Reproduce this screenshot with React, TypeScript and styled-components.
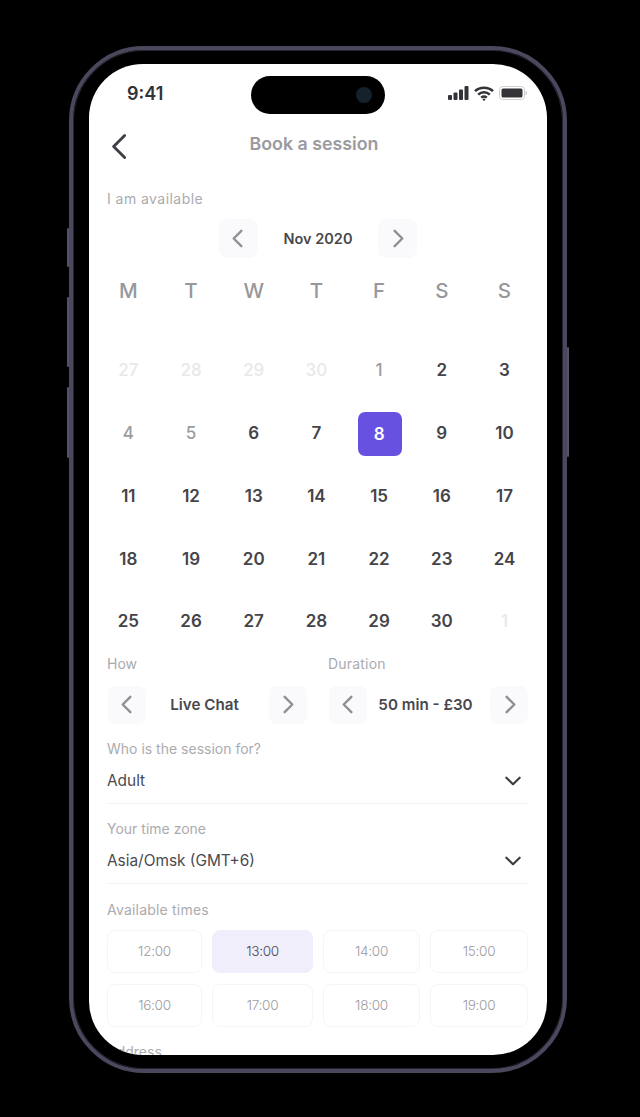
import React from 'react';
import styled, { createGlobalStyle } from 'styled-components';

const GlobalStyle = createGlobalStyle`
  html, body {
    margin: 0;
    padding: 0;
    background: #000;
    font-family: Inter, "Open Sans", sans-serif;
  }
  * { box-sizing: border-box; }
`;

const weekDays = ['M', 'T', 'W', 'T', 'F', 'S', 'S'];

type DayTone = 'faint' | 'muted' | 'normal' | 'selected';

const days: { label: number; tone: DayTone }[] = [
  ...[27, 28, 29, 30].map((label) => ({ label, tone: 'faint' as DayTone })),
  { label: 1, tone: 'muted' },
  { label: 2, tone: 'normal' },
  { label: 3, tone: 'normal' },
  { label: 4, tone: 'muted' },
  { label: 5, tone: 'muted' },
  { label: 6, tone: 'normal' },
  { label: 7, tone: 'normal' },
  { label: 8, tone: 'selected' },
  ...Array.from({ length: 22 }, (_, i) => ({ label: i + 9, tone: 'normal' as DayTone })),
  { label: 1, tone: 'faint' }
];

const times = ['12:00', '13:00', '14:00', '15:00', '16:00', '17:00', '18:00', '19:00'];

const Page = styled.div`
  width: 640px;
  height: 1117px;
  padding: 46px 0 0 69px;
  background: #000;
  overflow: hidden;
`;

const Phone = styled.div`
  position: relative;
  width: 498px;
  height: 1027px;
  padding: 14px 16px;
  border: 4px solid #4b475c;
  border-radius: 75px;
  background: #000;
  box-shadow: inset 0 0 0 1px #25232f;
`;

const SideButton = styled.div<{ $side: 'left' | 'right'; $top: number; $height: number }>`
  position: absolute;
  ${(p) => p.$side}: -6px;
  top: ${(p) => p.$top}px;
  width: 2px;
  height: ${(p) => p.$height}px;
  background: #55516a;
  border-radius: 1px;
`;

const Screen = styled.div`
  position: relative;
  width: 458px;
  height: 991px;
  padding: 0 19px 0 18px;
  background: #fff;
  border-radius: 54px;
  overflow: hidden;
`;

const Island = styled.div`
  position: absolute;
  left: 162px;
  top: 12px;
  width: 134px;
  height: 38px;
  background: #000;
  border-radius: 19px;
`;

const Camera = styled.div`
  position: absolute;
  right: 13px;
  top: 11px;
  width: 16px;
  height: 16px;
  border-radius: 50%;
  background: #14222e;
`;

const StatusBar = styled.div`
  display: flex;
  align-items: center;
  justify-content: space-between;
  height: 58px;
  padding: 0 1px 0 20px;
`;

const Clock = styled.span`
  font-size: 18px;
  font-weight: 600;
  color: #333338;
`;

const StatusIcons = styled.div`
  display: flex;
  align-items: center;
  gap: 5px;
`;

const Header = styled.div`
  position: relative;
  display: flex;
  align-items: center;
  justify-content: center;
  height: 42px;
  padding-right: 7px;
`;

const BackButton = styled.div`
  position: absolute;
  left: -3px;
  top: 8px;
  display: flex;
`;

const Title = styled.h1`
  margin: 0;
  font-size: 17.8px;
  font-weight: 600;
  color: #9a9a9f;
`;

const Label = styled.div<{ $mt: number; $track?: number }>`
  margin-top: ${(p) => p.$mt}px;
  height: 20px;
  font-size: 14px;
  line-height: 20px;
  font-weight: 400;
  letter-spacing: ${(p) => p.$track ?? 0}px;
  color: #ababaf;
`;

const MonthNav = styled.div`
  display: flex;
  align-items: center;
  margin: 10px 0 0 112px;
  width: 198px;
  justify-content: space-between;
`;

const NavButton = styled.div<{ $size: number }>`
  display: flex;
  flex: none;
  align-items: center;
  justify-content: center;
  width: ${(p) => p.$size}px;
  height: ${(p) => p.$size}px;
  border-radius: 8px;
  background: #faf9fc;
`;

const MonthValue = styled.span`
  font-size: 14.5px;
  font-weight: 600;
  color: #48484d;
  white-space: nowrap;
`;

const NavValue = styled.span`
  margin-right: 6px;
  font-size: 15.2px;
  font-weight: 600;
  color: #48484d;
  white-space: nowrap;
`;

const Calendar = styled.div`
  display: grid;
  grid-template-columns: repeat(7, 62.7px);
  margin-left: -10px;
  width: 439px;
`;

const WeekRow = styled(Calendar)`
  margin-top: 17px;
  height: 30px;
`;

const DaysGrid = styled(Calendar)`
  margin-top: 34px;
  grid-auto-rows: 62.75px;
`;

const WeekDay = styled.div`
  display: flex;
  align-items: center;
  justify-content: center;
  font-size: 20.5px;
  font-weight: 500;
  color: #97979c;
`;

const toneColors: Record<DayTone, string> = {
  faint: '#e8e8ea',
  muted: '#9b9b9f',
  normal: '#444449',
  selected: '#fff'
};

const DayCell = styled.div`
  display: flex;
  align-items: center;
  justify-content: center;
`;

const DayNumber = styled.div<{ $tone: DayTone }>`
  display: flex;
  align-items: center;
  justify-content: center;
  width: 44px;
  height: 44px;
  margin: ${(p) => (p.$tone === 'selected' ? '2px 0 0 2px' : '0')};
  padding-right: ${(p) => (p.$tone === 'selected' ? '2px' : '0')};
  border-radius: 7px;
  font-size: 17px;
  font-weight: ${(p) => (p.$tone === 'normal' || p.$tone === 'selected' ? 600 : 500)};
  color: ${(p) => toneColors[p.$tone]};
  background: ${(p) => (p.$tone === 'selected' ? '#6651e1' : 'transparent')};
`;

const OptionRow = styled.div`
  display: grid;
  grid-template-columns: 221px 200px;
  margin-top: 1px;
`;

const Stepper = styled.div`
  display: flex;
  align-items: center;
  justify-content: space-between;
  width: 199px;
  margin: 12px 0 0 1px;
`;

const Select = styled.div`
  display: flex;
  align-items: center;
  justify-content: space-between;
  margin-top: 11px;
  padding: 0 5px 11px 0;
  height: 34px;
  border-bottom: 1px solid #f1f1f3;
`;

const SelectValue = styled.span`
  font-size: 15.4px;
  line-height: 22px;
  color: #4a4a4f;
`;

const TimeGrid = styled.div`
  display: grid;
  grid-template-columns: 95px 101px 97px 98px;
  grid-auto-rows: 43px;
  gap: 11px 10px;
  margin-top: 10px;
`;

const TimeSlot = styled.div<{ $active?: boolean }>`
  display: flex;
  align-items: center;
  justify-content: center;
  border-radius: 8px;
  border: 1px solid ${(p) => (p.$active ? '#f0eefb' : '#f5f5f7')};
  background: ${(p) => (p.$active ? '#f0eefb' : '#fff')};
  font-size: 13.6px;
  font-weight: 300;
  letter-spacing: -0.3px;
  color: ${(p) => (p.$active ? '#4a4855' : '#9c9ca1')};
`;

const Chevron = ({
  dir,
  size = 23,
  color = '#8f8f94',
  width = 2.5
}: {
  dir: 'left' | 'right' | 'down';
  size?: number;
  color?: string;
  width?: number;
}) => {
  const d = dir === 'left' ? 'M15 4 7 12l8 8' : dir === 'right' ? 'M9 4l8 8-8 8' : 'M4 8l8 8 8-8';
  return (
    <svg width={size} height={size} viewBox="0 0 24 24" fill="none">
      <path d={d} stroke={color} strokeWidth={width} strokeLinecap="round" strokeLinejoin="round" />
    </svg>
  );
};

const SignalIcon = () => (
  <svg width="21" height="14" viewBox="0 0 21 14" fill="#333338">
    <rect x="0" y="9" width="4" height="5" rx="1" />
    <rect x="5.5" y="6.5" width="4" height="7.5" rx="1" />
    <rect x="11" y="3.5" width="4" height="10.5" rx="1" />
    <rect x="16.5" y="0" width="4" height="14" rx="1" />
  </svg>
);

const WifiIcon = () => (
  <svg width="20" height="15" viewBox="0 0 20 15" fill="none" stroke="#333338" strokeWidth="2.5">
    <path d="M1 5.2C6 .6 14 .6 19 5.2" />
    <path d="M4.2 8.6c3.3-3 8.3-3 11.6 0" />
    <path d="M7.2 11.6c1.6-1.3 4-1.3 5.6 0" />
    <circle cx="10" cy="13.6" r="1.2" fill="#333338" stroke="none" />
  </svg>
);

const BatteryIcon = () => (
  <svg width="28" height="14" viewBox="0 0 28 14">
    <rect x="0.5" y="0.5" width="25" height="13" rx="3" fill="none" stroke="#cfcfd2" />
    <rect x="2.5" y="2.5" width="21" height="9" rx="1.5" fill="#333338" />
    <rect x="26.5" y="5" width="1.5" height="4" rx="0.7" fill="#cfcfd2" />
  </svg>
);

export default function App() {
  return (
    <Page>
      <GlobalStyle />
      <Phone>
        <SideButton $side="left" $top={178} $height={39} />
        <SideButton $side="left" $top={247} $height={70} />
        <SideButton $side="left" $top={337} $height={71} />
        <SideButton $side="right" $top={297} $height={110} />
        <Screen>
          <Island>
            <Camera />
          </Island>
          <StatusBar>
            <Clock>9:41</Clock>
            <StatusIcons>
              <SignalIcon />
              <WifiIcon />
              <BatteryIcon />
            </StatusIcons>
          </StatusBar>
          <Header>
            <BackButton>
              <Chevron dir="left" size={33} color="#3f3f45" width={2.1} />
            </BackButton>
            <Title>Book a session</Title>
          </Header>
          <Label $mt={25} $track={0.45}>I am available</Label>
          <MonthNav>
            <NavButton $size={39}>
              <Chevron dir="left" />
            </NavButton>
            <MonthValue>Nov 2020</MonthValue>
            <NavButton $size={39}>
              <Chevron dir="right" />
            </NavButton>
          </MonthNav>
          <WeekRow>
            {weekDays.map((d, i) => (
              <WeekDay key={i}>{d}</WeekDay>
            ))}
          </WeekRow>
          <DaysGrid>
            {days.map((d, i) => (
              <DayCell key={i}>
                <DayNumber $tone={d.tone}>{d.label}</DayNumber>
              </DayCell>
            ))}
          </DaysGrid>
          <OptionRow>
            <div>
              <Label $mt={0}>How</Label>
              <Stepper>
                <NavButton $size={38}>
                  <Chevron dir="left" />
                </NavButton>
                <NavValue>Live Chat</NavValue>
                <NavButton $size={38}>
                  <Chevron dir="right" />
                </NavButton>
              </Stepper>
            </div>
            <div>
              <Label $mt={0} $track={0.2}>Duration</Label>
              <Stepper>
                <NavButton $size={38}>
                  <Chevron dir="left" />
                </NavButton>
                <NavValue>50 min - £30</NavValue>
                <NavButton $size={38}>
                  <Chevron dir="right" />
                </NavButton>
              </Stepper>
            </div>
          </OptionRow>
          <Label $mt={15}>Who is the session for?</Label>
          <Select>
            <SelectValue>Adult</SelectValue>
            <Chevron dir="down" size={20} color="#3f3f45" width={2.6} />
          </Select>
          <Label $mt={15}>Your time zone</Label>
          <Select>
            <SelectValue>Asia/Omsk (GMT+6)</SelectValue>
            <Chevron dir="down" size={20} color="#3f3f45" width={2.6} />
          </Select>
          <Label $mt={16} $track={0.2}>Available times</Label>
          <TimeGrid>
            {times.map((t) => (
              <TimeSlot key={t} $active={t === '13:00'}>
                {t}
              </TimeSlot>
            ))}
          </TimeGrid>
          <Label $mt={15}>Address</Label>
        </Screen>
      </Phone>
    </Page>
  );
}
